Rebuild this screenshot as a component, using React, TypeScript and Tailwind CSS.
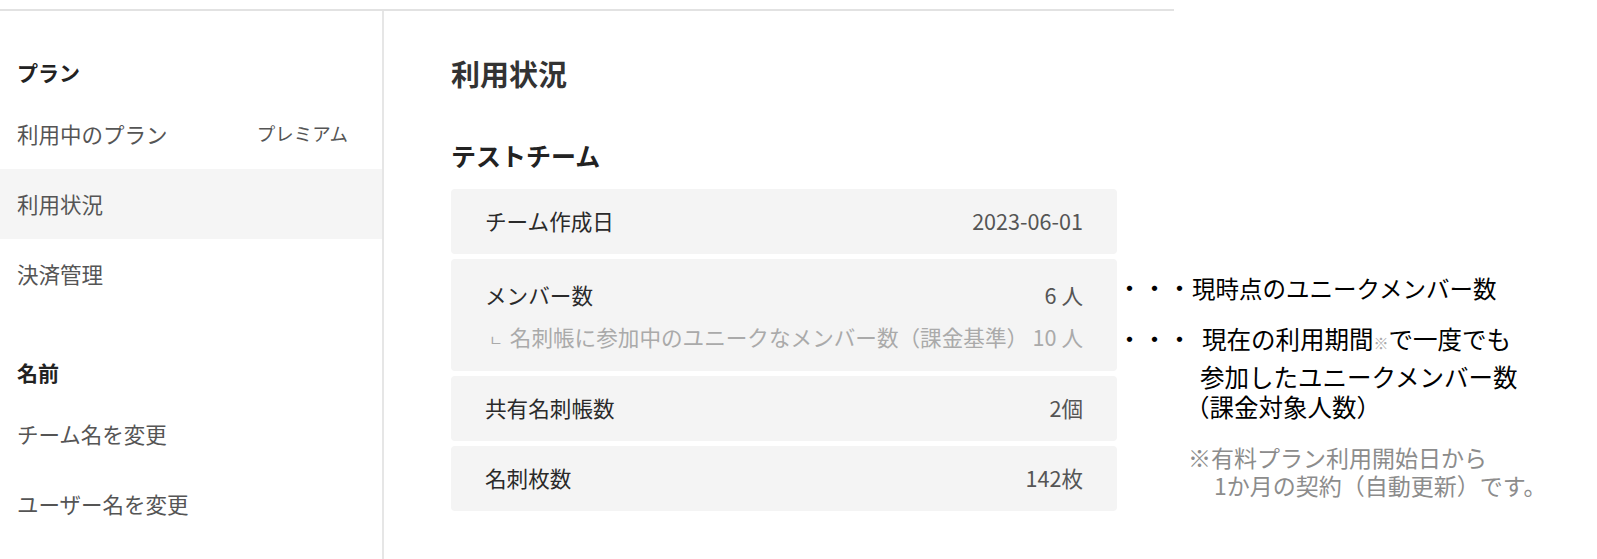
const sideSections = [
  {
    title: "プラン",
    items: [
      { label: "利用中のプラン", value: "プレミアム" },
      { label: "利用状況", active: true },
      { label: "決済管理" },
    ],
  },
  {
    title: "名前",
    items: [{ label: "チーム名を変更" }, { label: "ユーザー名を変更" }],
  },
];

const SimpleRow = ({ label, value }: { label: string; value: string }) => (
  <div className="h-[65px] rounded-[4px] bg-[#f4f4f4] px-[34px] flex items-center justify-between text-[21.6px]">
    <span className="text-[#2a2a2a]">{label}</span>
    <span className="text-[#555]">{value}</span>
  </div>
);

const App = () => {
  return (
    <div className="w-[1597px] h-[559px] bg-white overflow-hidden font-['Noto_Sans_CJK_JP','Noto_Sans',sans-serif]">
      <div className="pt-[9px]">
        <div className="w-[1174px] h-[2px] bg-[#e2e2e2]" />
      </div>

      <div className="flex h-[548px]">
        {/* sidebar */}
        <aside className="w-[384px] shrink-0 border-r-2 border-[#e6e6e6]">
          {sideSections.map((sec, i) => (
            <div key={sec.title} className={i > 0 ? "mt-[2px]" : ""}>
              <div className="pt-[47px] mb-[13px] px-[17px] leading-[28px] text-[21px] font-bold text-[#222]">
                {sec.title}
              </div>
              {sec.items.map((it) => (
                <div
                  key={it.label}
                  className={
                    "h-[70px] pl-[17px] pr-[34px] flex items-center justify-between " +
                    (it.active ? "bg-[#f5f5f5]" : "")
                  }
                >
                  <span className="text-[21.5px] text-[#555]">{it.label}</span>
                  {it.value && <span className="text-[18.5px] text-[#555]">{it.value}</span>}
                </div>
              ))}
            </div>
          ))}
        </aside>

        {/* main */}
        <main className="pl-[67px] w-[733px] shrink-0">
          <h1 className="pt-[42px] leading-[40px] text-[29px] font-bold text-[#333]">利用状況</h1>
          <h2 className="mt-[45px] leading-[34px] text-[25px] font-bold text-[#222]">テストチーム</h2>
          <div className="mt-[17px] w-[666px] flex flex-col gap-[5px]">
            <SimpleRow label="チーム作成日" value="2023-06-01" />
            <div className="rounded-[4px] bg-[#f4f4f4] px-[34px] pt-[21px] pb-[16px] text-[21.6px]">
              <div className="flex justify-between leading-[30px]">
                <span className="text-[#2a2a2a]">メンバー数</span>
                <span className="text-[#555]">6 人</span>
              </div>
              <div className="mt-[12px] flex justify-between leading-[30px] text-[#aaa] whitespace-nowrap">
                <span>
                  <span className="text-[15px] ml-[4px] mr-[7px]">ㄴ</span>名刺帳に参加中のユニークなメンバー数（課金基準）
                </span>
                <span>10 人</span>
              </div>
            </div>
            <SimpleRow label="共有名刺帳数" value="2個" />
            <SimpleRow label="名刺枚数" value="142枚" />
          </div>
        </main>

        {/* annotations */}
        <div className="pt-[261px] text-black whitespace-nowrap">
          <div className="leading-[30px]">
            <span className="text-[25px]">・・・</span>
            <span className="text-[23.5px]">現時点のユニークメンバー数</span>
          </div>
          <div className="mt-[16px] leading-[32px] text-[24.5px]">
            <span className="text-[25px]">・・・</span>
            <span className="ml-[10px]">現在の利用期間</span>
            <span className="text-[15px] text-[#aaa]">※</span>
            <span>で一度でも</span>
          </div>
          <div className="mt-[2px] leading-[32px] text-[24.5px] pl-[83px]">参加したユニークメンバー数</div>
          <div className="leading-[28px] text-[24.5px] pl-[68px]">（課金対象人数）</div>
          <div className="mt-[22px] text-[23px] text-[#8c8c8c] leading-[28px]">
            <div className="pl-[71px]">※有料プラン利用開始日から</div>
            <div className="pl-[97px]">1か月の契約（自動更新）です。</div>
          </div>
        </div>
      </div>
    </div>
  );
};

export default App;
